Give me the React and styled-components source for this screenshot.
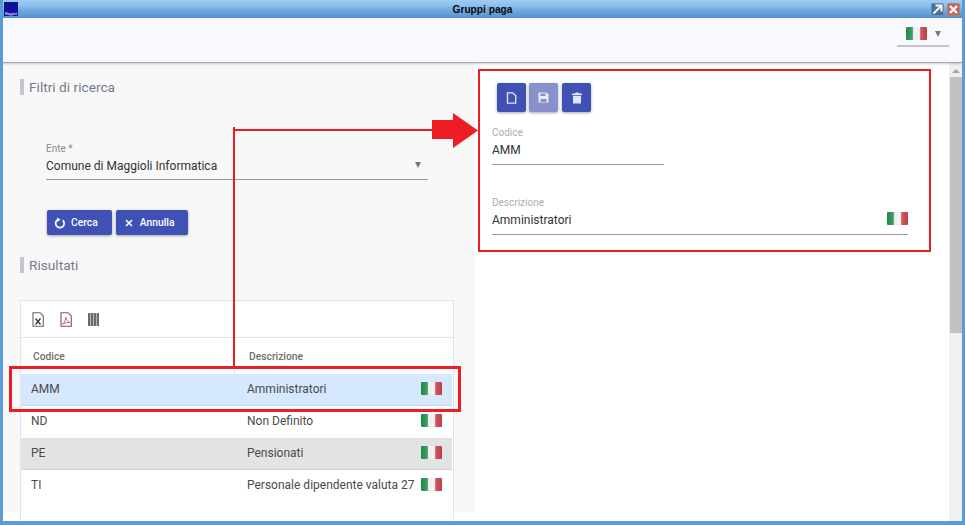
import React from 'react'
import styled, { createGlobalStyle } from 'styled-components'

const GlobalStyle = createGlobalStyle`
  html, body { margin: 0; padding: 0; }
  body { font-family: Roboto, "Liberation Sans", sans-serif; background: #fff; }
`

const Flag = ({ className }) => <FlagBox className={className} />

const rows = [
  { code: 'AMM', desc: 'Amministratori', kind: 'selected' },
  { code: 'ND', desc: 'Non Definito' },
  { code: 'PE', desc: 'Pensionati', kind: 'hover' },
  { code: 'TI', desc: 'Personale dipendente valuta 27' },
]

const App = () => {
  return (
    <>
      <GlobalStyle />
      <Window>
        <TitleBar>
          <Logo><LogoText>Maggioli</LogoText></Logo>
          <TitleText>Gruppi paga</TitleText>
          <WinButton>
            <svg width="11" height="11" viewBox="0 0 11 11">
              <path d="M1.5 9.5 L8 3 M3.5 1.5 H9.5 V7.5" fill="none" stroke="#fff" strokeWidth="2" />
            </svg>
          </WinButton>
          <WinButton $close>
            <svg width="11" height="11" viewBox="0 0 11 11">
              <path d="M2 2 L9 9 M9 2 L2 9" fill="none" stroke="#fff" strokeWidth="2.4" />
            </svg>
          </WinButton>
        </TitleBar>

        <TopBar>
          <LangSelect>
            <Flag />
            <Caret />
          </LangSelect>
        </TopBar>

        <Content>
          <LeftPanel>
            <SectionTitle>Filtri di ricerca</SectionTitle>
            <SelectField>
              <SmallLabel>Ente *</SmallLabel>
              <SelectValue>
                Comune di Maggioli Informatica
                <Caret />
              </SelectValue>
            </SelectField>
            <ButtonRow>
              <ActionButton>
                <svg width="12" height="12" viewBox="0 0 24 24">
                  <path d="M17.5 6.5 A8.5 8.5 0 1 1 8 5.2" fill="none" stroke="#fff" strokeWidth="3.4" />
                  <path d="M6 1 L13 5 L7 10 Z" fill="#fff" />
                </svg>
                Cerca
              </ActionButton>
              <ActionButton>
                <svg width="12" height="12" viewBox="0 0 24 24">
                  <path d="M6 6 L18 18 M18 6 L6 18" fill="none" stroke="#fff" strokeWidth="3.2" />
                </svg>
                Annulla
              </ActionButton>
            </ButtonRow>
            <ResultsTitle>Risultati</ResultsTitle>
            <Card>
              <CardTools>
                <svg width="12" height="15" viewBox="0 0 12 15">
                  <path d="M1 .7 H8 L11.3 4 V14.3 H1 Z" fill="#fff" stroke="#6b5f70" strokeWidth="1.1" />
                  <path d="M3.5 6.5 L8.5 12.5 M8.5 6.5 L3.5 12.5" stroke="#333" strokeWidth="1.3" />
                </svg>
                <svg width="12" height="15" viewBox="0 0 12 15">
                  <path d="M1 .7 H8 L11.3 4 V14.3 H1 Z" fill="#fff" stroke="#86497e" strokeWidth="1.1" />
                  <path d="M2.5 12.2 C5 10 6 7 5.6 5 C6.5 8 8 10 10 10.5 C7.5 10.4 5 11 2.5 12.2 Z" fill="none" stroke="#a85a7a" strokeWidth=".9" />
                </svg>
                <svg width="11" height="13" viewBox="0 0 11 13">
                  <path d="M0 0 H2.4 V13 H0 Z M2.9 0 H5.3 V13 H2.9 Z M5.8 0 H8.2 V13 H5.8 Z M8.7 0 H11 V13 H8.7 Z" fill="#6a6a74" />
                </svg>
              </CardTools>
              <TableHead>
                <HeadCell $w={214}>Codice</HeadCell>
                <HeadCell>Descrizione</HeadCell>
              </TableHead>
              {rows.map(r => (
                <TableRow key={r.code} $kind={r.kind}>
                  <CodeCell>{r.code}</CodeCell>
                  <DescCell>{r.desc}</DescCell>
                  <Flag />
                </TableRow>
              ))}
            </Card>
          </LeftPanel>

          <RightPanel>
            <IconButtons>
              <IconButton>
                <svg width="11" height="12" viewBox="0 0 11 12">
                  <path d="M1.5 .8 H6.8 L9.7 3.7 V11.2 H1.5 Z" fill="none" stroke="#e6ecfa" strokeWidth="1.3" />
                </svg>
              </IconButton>
              <IconButton $disabled>
                <svg width="11" height="11" viewBox="0 0 11 11">
                  <path d="M.5 .5 H8.5 L10.5 2.5 V10.5 H.5 Z" fill="#e6ecfa" />
                  <path d="M2.5 1.5 H7.5 V4 H2.5 Z M2.5 7 H8.5 V10 H2.5 Z" fill="#8891cb" />
                </svg>
              </IconButton>
              <IconButton>
                <svg width="10" height="12" viewBox="0 0 10 12">
                  <path d="M0 1.5 H3 L3.6 .5 H6.4 L7 1.5 H10 V3 H0 Z M1 3.8 H9 V11.5 H1 Z" fill="#dce8f8" />
                </svg>
              </IconButton>
            </IconButtons>
            <CodeField>
              <SmallLabel $light>Codice</SmallLabel>
              <FieldValue>AMM</FieldValue>
            </CodeField>
            <DescField>
              <SmallLabel $light>Descrizione</SmallLabel>
              <FieldValue>
                Amministratori
                <Flag />
              </FieldValue>
            </DescField>
          </RightPanel>

          <Scrollbar>
            <ScrollArrow />
            <ScrollThumb />
          </Scrollbar>
        </Content>

        <RedBoxRight />
        <RedBoxRow />
        <RedLineV />
        <RedLineH />
        <RedArrow viewBox="0 0 46 35">
          <path d="M0 7 H21 V0 L46 17.5 L21 35 V26 H0 Z" fill="#ee1c25" />
        </RedArrow>
      </Window>
    </>
  )
}

const Window = styled.div`
  position: relative;
  width: 965px;
  height: 525px;
  box-sizing: border-box;
  display: flex;
  flex-direction: column;
  border-left: 3px solid #5b9bd8;
  border-right: 3px solid #5b9bd8;
  border-bottom: 4px solid #5b9bd8;
  overflow: hidden;
`

const TitleBar = styled.div`
  flex: none;
  height: 18px;
  margin: 0 -3px;
  padding: 0 5px 0 4px;
  display: flex;
  align-items: center;
  gap: 2px;
  background: linear-gradient(#9fcdf5 0%, #8dbfec 30%, #6fa7de 60%, #5592cf 100%);
`

const Logo = styled.div`
  width: 14px;
  height: 14px;
  background: #10109a;
  display: flex;
  align-items: flex-end;
  justify-content: center;
  overflow: hidden;
`

const LogoText = styled.span`
  font: 700 3px "Liberation Sans", sans-serif;
  color: #cdd3f0;
`

const TitleText = styled.div`
  flex: 1;
  margin-left: 17px;
  text-align: center;
  font: 700 10.2px "Liberation Sans", sans-serif;
  color: #0a0a0a;
`

const WinButton = styled.div`
  width: 11px;
  height: 11px;
  border-radius: 2px;
  border: 1px solid ${p => (p.$close ? '#a8837f' : '#6f8fae')};
  background: ${p => (p.$close ? '#c4625a' : '#46709c')};
  display: flex;
  align-items: center;
  justify-content: center;
  margin-left: 1px;
`

const TopBar = styled.div`
  flex: none;
  height: 45px;
  box-sizing: border-box;
  padding-top: 4px;
  padding-right: 13px;
  background: #f8f9fe;
  border-bottom: 1px solid #a9a9a9;
  box-shadow: 0 1px 2px rgba(0, 0, 0, 0.2);
  display: flex;
  justify-content: flex-end;
  align-items: flex-start;
  position: relative;
`

const LangSelect = styled.div`
  width: 52px;
  height: 25px;
  box-sizing: border-box;
  padding: 5px 0 0 9px;
  border-bottom: 2px solid #c4c4c9;
  display: flex;
  gap: 8px;
`

const FlagBox = styled.div`
  flex: none;
  width: 21px;
  height: 13px;
  border-radius: 1px;
  filter: blur(0.5px);
  background: linear-gradient(90deg, #1f8a4a 0%, #3f9e63 30%, #eeeeee 36%, #f4f4f4 64%, #cf5b62 70%, #bd3c44 100%);
`

const Caret = styled.span`
  width: 0;
  height: 0;
  margin-top: 4px;
  border-left: 3.5px solid transparent;
  border-right: 3.5px solid transparent;
  border-top: 6px solid #77777f;
`

const Content = styled.div`
  flex: 1;
  min-height: 0;
  display: flex;
`

const LeftPanel = styled.div`
  flex: none;
  width: 472px;
  box-sizing: border-box;
  padding: 16px 0 0 17px;
  background: linear-gradient(#f8f8f8 449px, #fff 449px);
  display: flex;
  flex-direction: column;
`

const SectionTitle = styled.div`
  height: 16px;
  padding-left: 5px;
  border-left: 4px solid #c3c6cc;
  font-size: 13.7px;
  line-height: 16px;
  color: #757a8c;
`

const ResultsTitle = styled(SectionTitle)`
  margin-top: 22px;
`

const SelectField = styled.div`
  width: 382px;
  margin: 48px 0 0 26px;
  height: 37px;
  box-sizing: border-box;
  border-bottom: 1px solid #9b9b9b;
`

const SmallLabel = styled.div`
  font-size: 10px;
  line-height: 12px;
  color: ${p => (p.$light ? '#a9adb5' : '#8b8b8b')};
`

const SelectValue = styled.div`
  margin-top: 3px;
  display: flex;
  justify-content: space-between;
  font-size: 12px;
  line-height: 16px;
  color: #333;
  padding-right: 7px;
`

const ButtonRow = styled.div`
  display: flex;
  gap: 4px;
  margin: 30px 0 0 27px;
`

const ActionButton = styled.div`
  height: 25px;
  padding: 0 14px 0 7px;
  display: flex;
  align-items: center;
  gap: 5px;
  border-radius: 2px;
  background: #3f51b5;
  box-shadow: 0 1px 3px rgba(0, 0, 0, 0.35);
  color: #fff;
  font-size: 10.3px;
  font-weight: 500;
`

const Card = styled.div`
  flex: 1;
  margin: 27px 21px 0 0;
  background: #fff;
  border: 1px solid #e3e3e3;
  border-bottom: none;
`

const CardTools = styled.div`
  height: 37px;
  box-sizing: border-box;
  padding: 1px 0 0 11px;
  display: flex;
  align-items: center;
  gap: 16px;
  border-bottom: 1px solid #e3e3e3;
`

const TableHead = styled.div`
  height: 36px;
  display: flex;
`

const HeadCell = styled.div`
  width: ${p => (p.$w ? `${p.$w}px` : 'auto')};
  flex: ${p => (p.$w ? 'none' : 1)};
  box-sizing: border-box;
  padding: 12px 0 0 12px;
  font-size: 10.3px;
  font-weight: 500;
  color: #6f6f6f;
  border-right: 1px solid #e3e3e3;
  &:last-child { border-right: none; padding-left: 14px; }
`

const rowBg = { selected: '#d5e8fd', hover: '#e3e3e3' }
const rowBorder = { selected: '#bcd5ee', hover: '#cfcfcf' }

const TableRow = styled.div`
  height: 32px;
  margin-right: 1px;
  box-sizing: border-box;
  display: flex;
  align-items: center;
  padding: 0 10px 2px 10px;
  background: ${p => rowBg[p.$kind] || '#fff'};
  border-bottom: 1px solid ${p => rowBorder[p.$kind] || 'transparent'};
  font-size: 12px;
  color: #4a4a4a;
`

const CodeCell = styled.div`
  width: 216px;
`

const DescCell = styled.div`
  flex: 1;
`

const RightPanel = styled.div`
  flex: 1;
  background: #fff;
  padding: 20px 0 0 17px;
  box-sizing: border-box;
  display: flex;
  flex-direction: column;
`

const IconButtons = styled.div`
  display: flex;
  gap: 3.7px;
  margin-left: 4.7px;
`

const IconButton = styled.div`
  width: 29px;
  height: 29px;
  border-radius: 2px;
  background: ${p => (p.$disabled ? '#8891cb' : '#3f51b5')};
  box-shadow: 0 1px 3px rgba(0, 0, 0, 0.35);
  display: flex;
  align-items: center;
  justify-content: center;
`

const CodeField = styled.div`
  width: 172px;
  margin-top: 15px;
  height: 38px;
  box-sizing: border-box;
  border-bottom: 1px solid #9b9b9b;
`

const DescField = styled.div`
  width: 416px;
  margin-top: 32px;
  height: 38px;
  box-sizing: border-box;
  border-bottom: 1px solid #9b9b9b;
`

const FieldValue = styled.div`
  margin-top: 3px;
  display: flex;
  justify-content: space-between;
  font-size: 12px;
  line-height: 16px;
  color: #333;
`

const Scrollbar = styled.div`
  flex: none;
  width: 13px;
  background: #f0f0f0;
  display: flex;
  flex-direction: column;
  align-items: center;
`

const ScrollArrow = styled.span`
  margin: 6px 0 4px;
  width: 0;
  height: 0;
  border-left: 4px solid transparent;
  border-right: 4px solid transparent;
  border-bottom: 4px solid #a5a5a5;
`

const ScrollThumb = styled.div`
  width: 12px;
  height: 256px;
  background: #c1c1c1;
`

const RedBoxRight = styled.div`
  position: absolute;
  left: 475px;
  top: 69px;
  width: 453px;
  height: 183px;
  box-sizing: border-box;
  border: 2px solid #ee1c25;
`

const RedBoxRow = styled.div`
  position: absolute;
  left: 6px;
  top: 366px;
  width: 452px;
  height: 46px;
  box-sizing: border-box;
  border: 3px solid #ee1c25;
`

const RedLineV = styled.div`
  position: absolute;
  left: 230px;
  top: 127px;
  width: 2px;
  height: 239px;
  background: #ee1c25;
`

const RedLineH = styled.div`
  position: absolute;
  left: 230px;
  top: 129px;
  width: 200px;
  height: 2px;
  background: #ee1c25;
`

const RedArrow = styled.svg`
  position: absolute;
  left: 429px;
  top: 113px;
  width: 46px;
  height: 35px;
`

export default App
